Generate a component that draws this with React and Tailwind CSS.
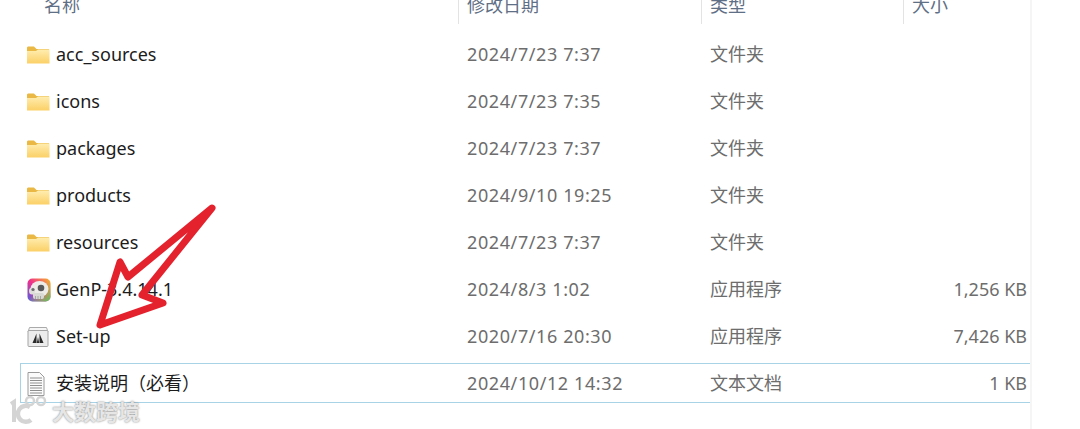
import React from "react";

const rows = [
  { name: "acc_sources", icon: "folder", date: "2024/7/23 7:37", type: "文件夹", size: "" },
  { name: "icons", icon: "folder", date: "2024/7/23 7:35", type: "文件夹", size: "" },
  { name: "packages", icon: "folder", date: "2024/7/23 7:37", type: "文件夹", size: "" },
  { name: "products", icon: "folder", date: "2024/9/10 19:25", type: "文件夹", size: "" },
  { name: "resources", icon: "folder", date: "2024/7/23 7:37", type: "文件夹", size: "" },
  { name: "GenP-3.4.14.1", icon: "genp", date: "2024/8/3 1:02", type: "应用程序", size: "1,256 KB" },
  { name: "Set-up", icon: "adobe", date: "2020/7/16 20:30", type: "应用程序", size: "7,426 KB" },
  { name: "安装说明（必看）", icon: "text", date: "2024/10/12 14:32", type: "文本文档", size: "1 KB", selected: true },
];

const FolderIcon = () => (
  <svg width="23" height="18" viewBox="0 0 23 18" className="block">
    <defs>
      <linearGradient id="folderFill" x1="0" y1="0" x2="0" y2="1">
        <stop offset="0" stopColor="#ffedb0" />
        <stop offset="1" stopColor="#fbd066" />
      </linearGradient>
    </defs>
    <path d="M0 2C0 1 .6.500 1.500.500H7L9.500 3H22V6H0Z" fill="#eab945" />
    <path d="M0 5H9L11 3.500H22.500V17.500H0Z" fill="url(#folderFill)" />
  </svg>
);

const GenpIcon = () => (
  <svg width="24" height="24" viewBox="0 0 24 24" className="block">
    <defs>
      <linearGradient id="genpWarm" x1="1" y1="0" x2="0" y2="1">
        <stop offset="0" stopColor="#f6b62a" />
        <stop offset="0.5" stopColor="#f0308a" />
        <stop offset="1" stopColor="#4a60e8" />
      </linearGradient>
      <linearGradient id="genpCool" x1="0" y1="0" x2="1" y2="1">
        <stop offset="0.45" stopColor="#d0e030" stopOpacity="0" />
        <stop offset="1" stopColor="#40d060" />
      </linearGradient>
    </defs>
    <rect x="0.500" y="0.500" width="23" height="23" rx="5" fill="url(#genpWarm)" />
    <rect x="0.500" y="0.500" width="23" height="23" rx="5" fill="url(#genpCool)" />
    <ellipse cx="12.500" cy="11" rx="9" ry="8" fill="#ecebe8" />
    <ellipse cx="5" cy="13" rx="3" ry="3.500" fill="#dededa" />
    <rect x="6" y="15" width="11" height="6" rx="2" fill="#d8d8d4" />
    <path d="M8.500 18v3M11 18v3M13.500 18v3" stroke="#9b9b98" strokeWidth=".8" />
    <circle cx="14" cy="10" r="3.300" fill="#58585a" />
    <circle cx="6" cy="11.500" r="1.600" fill="#6a6a6c" />
  </svg>
);

const AdobeIcon = () => (
  <svg width="22" height="22" viewBox="0 0 22 22" className="block">
    <path d="M2.500 1.500H19.500L21 6H1Z" fill="#f6f6f6" stroke="#aaaaaa" />
    <rect x="1" y="4.500" width="20" height="16" rx="1" fill="#ececec" stroke="#a4a4a4" />
    <path d="M5.500 17 9.500 7.500V17ZM16.500 17 12.500 7.500V17ZM11 11 12.200 17H9.800Z" fill="#2a2a2a" />
  </svg>
);

const TextIcon = () => (
  <svg width="18" height="24" viewBox="0 0 18 24" className="block">
    <path d="M1 .5H12.500L17 5V23.500H1Z" fill="#fbfbfb" stroke="#9a9a9a" />
    <path d="M3 6h12M3 8.500h12M3 11h12M3 13.500h12M3 16h12M3 18.500h12M3 21h12" stroke="#8f8f8f" />
  </svg>
);

const icons = { folder: FolderIcon, genp: GenpIcon, adobe: AdobeIcon, text: TextIcon };

const Row = ({ row }) => {
  const Icon = icons[row.icon];
  return (
    <div className="h-[47px] flex items-center">
      <div className={`w-[1010px] h-[40px] pt-[2px] flex items-center border border-r-0 ${row.selected ? "border-[#a8d2e6]" : "border-transparent"}`}>
        <div className="w-[438px] flex items-center shrink-0">
          <div className="w-[35px] pl-[6px] flex items-center shrink-0">
            <Icon />
          </div>
          <span className="text-[18px] text-[#1c1c1c] whitespace-nowrap">{row.name}</span>
        </div>
        <span className="w-[251px] pl-[8px] shrink-0 text-[18px] tracking-[0.6px] text-[#6d6d6d] whitespace-nowrap">{row.date}</span>
        <span className="w-[150px] shrink-0 text-[18px] text-[#6d6d6d] whitespace-nowrap">{row.type}</span>
        <span className="w-[167px] shrink-0 text-right text-[18px] text-[#6d6d6d] whitespace-nowrap">{row.size}</span>
      </div>
    </div>
  );
};

export default function App() {
  return (
    <div className="relative w-[1080px] h-[429px] overflow-hidden bg-white font-['Noto_Sans','Noto_Sans_CJK_SC',sans-serif]">
      <div className="w-[1032px] h-full border-r-2 border-[#f5f5f5]">
        <div className="h-[24px] flex text-[18px] leading-[10px] text-[#5f6f85]">
          <div className="w-[458px] pl-[44px]">名称</div>
          <div className="w-[243px] pl-[8px] border-l border-[#e3e3e3]">修改日期</div>
          <div className="w-[202px] pl-[8px] border-l border-[#e3e3e3]">类型</div>
          <div className="flex-1 pl-[8px] border-l border-[#e3e3e3]">大小</div>
        </div>
        <div className="h-[6px]" />
        <div className="pl-[20px]">
          {rows.map(row => (
            <Row key={row.name} row={row} />
          ))}
        </div>
      </div>

      {/* hand drawn arrow */}
      <svg width="1080" height="429" className="absolute inset-0 pointer-events-none">
        <path
          d="M212 208 L128 277 L120 262 L100 325 L163 303 L142 295 Z"
          fill="none"
          stroke="#e4222e"
          strokeWidth="7"
          strokeLinejoin="round"
        />
      </svg>

      {/* watermark */}
      <div className="absolute left-[9px] top-[391px] flex items-center gap-[3px] pointer-events-none">
        <svg width="40" height="32" viewBox="0 0 40 32" fill="none" stroke="#d4d4d4" strokeWidth="4">
          <path d="M2 10 5 8V28" />
          <path d="M21 13a8 8 0 1 0 1 13" strokeWidth="4.500" />
          <circle cx="21" cy="7" r="4" strokeWidth="2.500" />
          <circle cx="32" cy="7" r="4" strokeWidth="2.500" />
        </svg>
        <span className="mt-[4px] text-[22px] font-bold text-[#e6e6e6] [text-shadow:0_0_2px_#7a7a7a] whitespace-nowrap">大数跨境</span>
      </div>
    </div>
  );
}
